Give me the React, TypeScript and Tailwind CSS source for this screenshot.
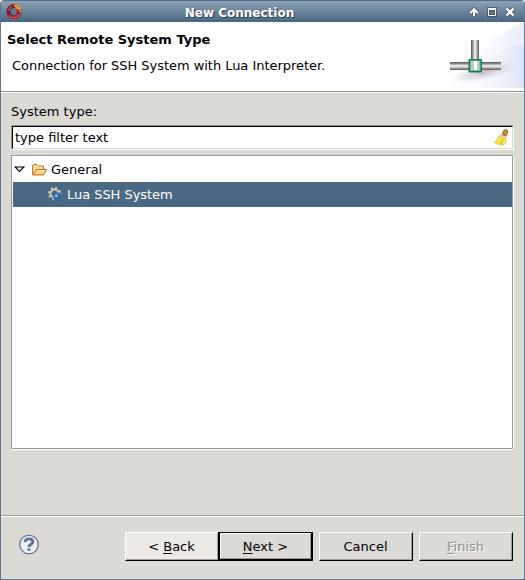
import type { ReactNode } from "react";

function AppIcon() {
  return (
    <svg width="17" height="17" viewBox="0 0 17 17">
      <defs>
        <linearGradient id="ring" x1="0" y1="0" x2="1" y2="1">
          <stop offset="0" stopColor="#6b2038" />
          <stop offset=".5" stopColor="#7b1832" />
          <stop offset="1" stopColor="#b52a40" />
        </linearGradient>
      </defs>
      <circle cx="8" cy="8.6" r="7.5" fill="url(#ring)" />
      <path d="M2.500 8a6 6 0 0 1 3.500-4.500" stroke="#a65068" strokeWidth="1.500" fill="none" />
      <path d="M3 12.500c3 3.500 8 2.500 10-1.500" stroke="#e0484c" strokeWidth="1.300" fill="none" />
      <ellipse cx="7.800" cy="8.600" rx="3.300" ry="3.600" fill="#5f7890" />
      <path d="M7 2c2.500-1.500 6-.5 7.200 2c1.300 2 .8 4.500 0 6.500c-.5-3-2.200-4.500-5-5c.8-1.200-.4-2.200-2.200-3.500z" fill="#efa040" />
      <path d="M9.500 1.500l1.500 2M13.500 3.500l-2 1.200M15 7.500l-2-1" stroke="#b5482f" strokeWidth=".8" />
    </svg>
  );
}

function Banner() {
  return (
    <svg width="78" height="66" viewBox="446 22 78 66" className="block">
      <defs>
        <linearGradient id="sweep" x1="0" y1="0" x2="1" y2="0">
          <stop offset="0" stopColor="#fff" />
          <stop offset=".5" stopColor="#f7f9fd" />
          <stop offset="1" stopColor="#eaeffa" />
        </linearGradient>
        <linearGradient id="sweep2" x1="0" y1="0" x2="1" y2="0">
          <stop offset="0" stopColor="#fff" stopOpacity="0" />
          <stop offset="1" stopColor="#d9e2f6" />
        </linearGradient>
        <linearGradient id="vpipe" x1="0" y1="0" x2="1" y2="0">
          <stop offset="0" stopColor="#555" />
          <stop offset=".2" stopColor="#8b8b8b" />
          <stop offset=".5" stopColor="#fafafa" />
          <stop offset=".8" stopColor="#999" />
          <stop offset="1" stopColor="#555" />
        </linearGradient>
        <linearGradient id="hpipe" x1="0" y1="0" x2="0" y2="1">
          <stop offset="0" stopColor="#555" />
          <stop offset=".2" stopColor="#8b8b8b" />
          <stop offset=".5" stopColor="#fafafa" />
          <stop offset=".8" stopColor="#999" />
          <stop offset="1" stopColor="#555" />
        </linearGradient>
        <radialGradient id="shade">
          <stop offset="0" stopColor="#b8a9b8" stopOpacity=".8" />
          <stop offset="1" stopColor="#d9d3e3" stopOpacity="0" />
        </radialGradient>
      </defs>
      <path d="M524 22.500C498 32 470 54 452 88H524z" fill="url(#sweep)" />
      <path d="M524 44C500 48 480 62 462 88H524z" fill="url(#sweep2)" opacity=".8" />
      <ellipse cx="484" cy="72" rx="36" ry="9" fill="url(#shade)" transform="rotate(-12 484 72)" />
      <rect x="471" y="40" width="8" height="20" fill="url(#vpipe)" />
      <rect x="450" y="62" width="51" height="8" fill="url(#hpipe)" />
      <rect x="468.500" y="59" width="13.500" height="13.500" rx="1" fill="#16834c" />
      <rect x="470" y="60.500" width="10.500" height="10.500" fill="#79b793" />
      <rect x="471" y="61" width="8.500" height="9" fill="#bdd0c4" />
      <rect x="474" y="61" width="3" height="9" fill="#fff" />
    </svg>
  );
}

function Broom() {
  return (
    <svg width="15" height="17" viewBox="0 0 15 17">
      <path d="M8 6.500l1.500-4.500c1-2 4.500-1.500 4.500.8L12 7.500z" fill="#bf7a2c" stroke="#8a5018" strokeWidth=".7" />
      <path d="M10.500 4l1-1.500M12 5.500l.7-1.500" stroke="#e9b66b" strokeWidth="1" />
      <path d="M5 6.500C4 9.500 2 12 .5 13.500c2 1.800 6 2.800 9.500 2.500c1.500-2 2.500-4.500 2-7.500z" fill="#efdc3d" stroke="#dcc32b" strokeWidth=".7" />
      <path d="M6 9l-2.500 5M10.500 10.500L10 14" stroke="#fff59b" />
      <path d="M8.500 10l-1.500 5" stroke="#d8c02c" />
      <path d="M5 6.300l7.300 2.200" stroke="#ddd2bd" strokeWidth="2" />
    </svg>
  );
}

function Folder() {
  return (
    <svg width="16" height="14" viewBox="0 0 16 14" className="block">
      <path d="M.5 11.500V3l1-1.500h3.500L6.500 3H11.500v3" fill="#f8dc98" stroke="#b9772d" />
      <path d="M.7 12L4.500 6.500H14.500l-3 5.500z" fill="#fbd586" stroke="#b9691c" />
      <path d="M5 7.500h7.800" stroke="#fff2c5" />
    </svg>
  );
}

function GearSphere() {
  return (
    <svg width="15" height="15" viewBox="0 0 15 15">
      <circle cx="6.500" cy="6.500" r="4" fill="#53697d" stroke="#cbc6b8" strokeWidth="1.900" />
      <circle cx="6.500" cy="6.500" r="5.600" fill="none" stroke="#dedacd" strokeWidth="1.800" strokeDasharray="1.900 2.498" />
      <circle cx="9.300" cy="9.800" r="4" fill="#2f64a8" />
      <circle cx="8.300" cy="8.800" r="1.700" fill="#86b2e0" />
      <circle cx="13" cy="6" r="1.300" fill="#4a86c9" />
    </svg>
  );
}

function WindowControls() {
  return (
    <svg width="48" height="14" viewBox="468 6 48 14" className="mt-[3px] block">
      <g fill="none" stroke="#2f4356" strokeWidth="4" opacity=".55">
        <path d="M474 16V10M470.500 13l3.500-3.500 3.500 3.500" />
        <path d="M506.500 8.500l7 7M513.500 8.500l-7 7" />
      </g>
      <rect x="487" y="7" width="10" height="10" fill="#2f4356" opacity=".6" />
      <rect x="490" y="11" width="4" height="3" fill="#5c758d" />
      <g fill="none" stroke="#fff">
        <path d="M474 16V9.500M470.300 13l3.700-3.700 3.700 3.700" strokeWidth="2.100" />
        <path d="M488.500 9.500h7v6h-7zM488 8.500h8" strokeWidth="1" />
        <path d="M506.500 8.500l7 7M513.500 8.500l-7 7" strokeWidth="2.300" />
      </g>
    </svg>
  );
}

function Separator() {
  return <div className="h-[2px] shrink-0 border-t border-[#9b9890] bg-white" />;
}

function Button({ children, variant = "normal" }: { children: ReactNode; variant?: "normal" | "hover" | "default" | "disabled" }) {
  if (variant === "default") {
    return (
      <button className="h-[29px] w-[95px] border-t border-r-2 border-b-2 border-l-2 border-black bg-[#dbdad5]">
        <span className="flex h-full items-center justify-center border-t border-r border-b border-l border-t-white border-r-[#9b9890] border-b-[#9b9890] border-l-white pt-px">
          <span>{children}</span>
        </span>
      </button>
    );
  }
  const look =
    variant === "hover"
      ? "w-[93px] bg-[#edeae6] border-r-0"
      : variant === "disabled"
        ? "w-[94px] bg-[#dbdad5] text-[#92908a] [text-shadow:1px_1px_0_#fff]"
        : "w-[94px] bg-[#dbdad5]";
  return (
    <button className={"h-[29px] border border-t-white border-r-black border-b-black border-l-white " + look}>
      <span className="flex h-full items-center justify-center border-r border-b border-[#a29b94] pt-px">
        <span>{children}</span>
      </span>
    </button>
  );
}

function Mnemonic({ children }: { children: ReactNode }) {
  return <span className="underline decoration-1 underline-offset-2">{children}</span>;
}

export default function App() {
  return (
    <div className="h-[580px] w-[525px] bg-white font-['DejaVu_Sans',sans-serif] text-[13px] text-black">
      <div className="flex h-[580px] w-[525px] flex-col overflow-hidden rounded-t-[4px] border-r border-b border-l border-[#5f7892] bg-[#dbdad5]">
        <header className="relative flex h-[22px] shrink-0 items-center justify-between border-t border-[#526a82] bg-linear-to-b from-[#8da1b5] to-[#4a6780] pr-[8px] pl-[5px]">
          <AppIcon />
          <h1 className="absolute inset-x-0 top-[3px] pr-[46px] text-center text-[12px] leading-[18px] font-bold text-white [text-shadow:1px_1px_1px_#2f4356]">New Connection</h1>
          <WindowControls />
        </header>

        <section className="flex h-[69px] shrink-0 justify-between bg-white">
          <div className="pt-[9px] pl-[6px] leading-[18px]">
            <h2 className="font-bold">Select Remote System Type</h2>
            <p className="mt-[8px] pl-[5px] tracking-[-0.04px]">Connection for SSH System with Lua Interpreter.</p>
          </div>
          <Banner />
        </section>
        <Separator />

        <main className="flex flex-1 flex-col pr-[10px] pl-[10px]">
          <label className="mt-[10px] h-[22px] leading-[18px]">System type:</label>
          <div className="h-[25px] border border-t-[#9b9890] border-r-white border-b-white border-l-[#9b9890]">
            <div className="flex h-[23px] items-center justify-between border border-t-black border-r-[#dbdad5] border-b-[#dbdad5] border-l-black bg-white pr-[3px] pl-[2px]">
              <span>type filter text</span>
              <Broom />
            </div>
          </div>
          <div className="mt-[5px] h-[295px] border-r border-b border-white">
            <div className="h-[294px] border border-[#9b9890] bg-white pt-px pl-px">
              <div className="flex h-[25px] items-center">
                <svg width="11" height="7" viewBox="0 0 11 7" className="-mt-px ml-px">
                  <path d="M1 1h9L5.500 5.500z" fill="#fff" stroke="#000" strokeWidth="1.100" />
                </svg>
                <span className="ml-[7px]"><Folder /></span>
                <span className="ml-[3px]">General</span>
              </div>
              <div className="flex h-[25px] items-center bg-[#4b6983] pl-[35px] text-white">
                <GearSphere />
                <span className="ml-[4px] tracking-[-0.04px]">Lua SSH System</span>
              </div>
            </div>
          </div>
        </main>

        <Separator />
        <footer className="flex h-[62px] shrink-0 items-start pt-[15px] pr-[11px] pl-[18px]">
          <svg width="20" height="21" viewBox="0 0 21 21" className="mt-[2px]">
            <circle cx="10.500" cy="10.500" r="9.700" fill="#eeeef0" stroke="#526d94" strokeWidth="1.200" />
            <path d="M6.500 8c0-4.500 8-4.500 8-.5c0 3-4 2.500-4 5.500" fill="none" stroke="#5a7297" strokeWidth="3" />
            <path d="M9 14.500h3v2.500H9z" fill="#5a7297" />
          </svg>
          <div className="ml-auto flex">
            <Button variant="hover">&lt; <Mnemonic>B</Mnemonic>ack</Button>
            <Button variant="default"><Mnemonic>N</Mnemonic>ext &gt;</Button>
            <div className="ml-[6px] flex gap-[6px]">
              <Button>Cancel</Button>
              <Button variant="disabled"><Mnemonic>F</Mnemonic>inish</Button>
            </div>
          </div>
        </footer>
      </div>
    </div>
  );
}
